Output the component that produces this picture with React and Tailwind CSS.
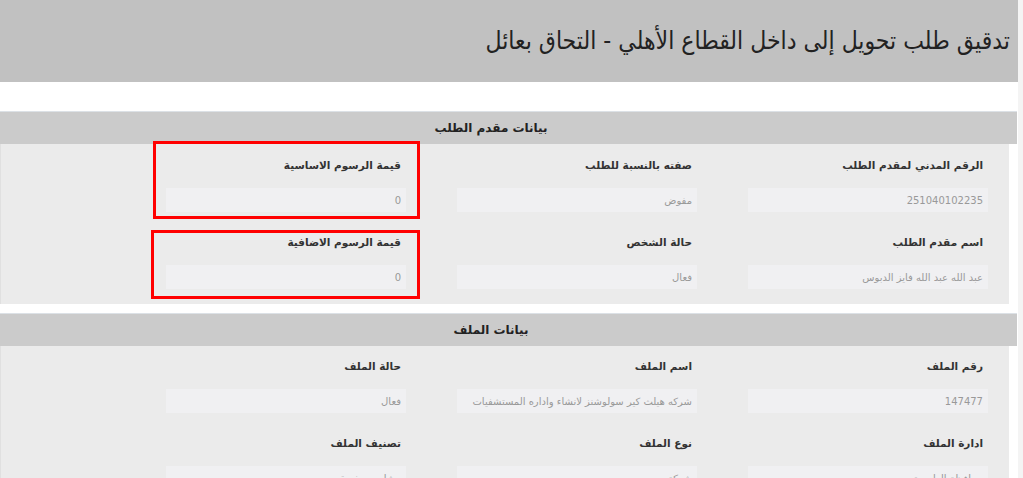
import React from "react";

const font = { fontFamily: '"DejaVu Sans", "Noto Sans", sans-serif' };

function Field({ label, value }) {
  return (
    <div className="w-[240px] flex flex-col">
      <div className="h-[16px] leading-[16px] pr-[5px] text-[10.5px] font-bold text-[#333]">{label}</div>
      <div className="mt-[15px] h-[24px] bg-[#f0f0f2] pr-[5px] flex items-center text-[10px] text-[#999]">{value}</div>
    </div>
  );
}

function Section({ title, rows, pt }) {
  return (
    <div>
      <div className="h-[33px] w-[1017px] mr-auto bg-[#cbcbcb] border-t border-[#dce1e6] flex items-center justify-center pr-[35px] text-[12px] font-bold text-[#222]">
        {title}
      </div>
      <div className={`w-[1009px] mr-auto bg-[#ebebeb] border-l border-[#e0e0e0] pr-[21px] ${pt} pb-[15px] flex flex-col gap-[22px]`}>
        {rows.map((r, i) => (
          <div key={i} className="flex gap-x-[51px]">
            {r.map((f, j) => (
              <Field key={j} label={f[0]} value={f[1]} />
            ))}
          </div>
        ))}
      </div>
    </div>
  );
}

export default function App() {
  return (
    <div dir="rtl" style={font} className="relative w-[1023px] h-[478px] overflow-hidden bg-white flex items-start">
      <div className="w-[5px] h-[478px] shrink-0 bg-[#f4f4f4]" />
      <div className="w-[1018px] shrink-0">
        <div className="h-[82px] bg-[#c1c1c1] flex items-center pr-[8px]">
          <h1 style={{ fontFamily: '"DejaVu Sans Condensed", "DejaVu Sans", sans-serif' }} className="text-[24.5px] text-[#222] font-normal">
            تدقيق طلب تحويل إلى داخل القطاع الأهلي - التحاق بعائل
          </h1>
        </div>
        <div className="h-[29px]" />
        <Section
          title="بيانات مقدم الطلب"
          pt="pt-[13px]"
          rows={[
            [
              ["الرقم المدني لمقدم الطلب", "251040102235"],
              ["صفته بالنسبة للطلب", "مفوض"],
              ["قيمة الرسوم الاساسية", "0"],
            ],
            [
              ["اسم مقدم الطلب", "عبد الله عبد الله فايز الدبوس"],
              ["حالة الشخص", "فعال"],
              ["قيمة الرسوم الاضافية", "0"],
            ],
          ]}
        />
        <div className="h-[9px]" />
        <Section
          title="بيانات الملف"
          pt="pt-[12px]"
          rows={[
            [
              ["رقم الملف", "147477"],
              ["اسم الملف", "شركه هيلث كير سولوشنز لانشاء واداره المستشفيات"],
              ["حالة الملف", "فعال"],
            ],
            [
              ["ادارة الملف", "محافظة العاصمة"],
              ["نوع الملف", "شركة"],
              ["تصنيف الملف", "مشاريع صغيرة"],
            ],
          ]}
        />
      </div>
      <div className="absolute left-[153px] top-[141px] w-[267px] h-[78px] border-[3px] border-[#ff0000]" />
      <div className="absolute left-[151px] top-[230px] w-[269px] h-[69px] border-[3px] border-[#ff0000]" />
    </div>
  );
}
